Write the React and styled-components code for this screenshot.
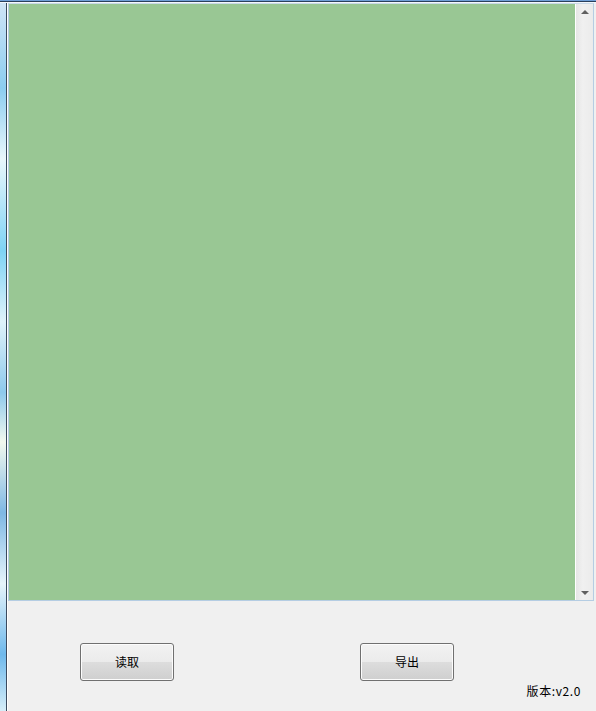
import React from 'react';
import styled, { createGlobalStyle } from 'styled-components';

const GlobalStyle = createGlobalStyle`
  html, body {
    margin: 0;
    padding: 0;
    background: #f0f0f0;
  }
  body {
    font-family: "Noto Sans CJK SC", "DejaVu Sans", sans-serif;
    font-size: 12px;
    color: #000;
  }
`;

const Screen = styled.div`
  width: 596px;
  height: 711px;
  display: flex;
  flex-direction: column;
  overflow: hidden;
  background: #f0f0f0;
`;

const TopEdge = styled.div`
  height: 3px;
  flex: none;
  background: linear-gradient(
    to bottom,
    #6f9fd8 0,
    #6f9fd8 1px,
    #2b3f5a 1px,
    #2b3f5a 2px,
    #f4f8fc 2px
  );
`;

const Body = styled.div`
  flex: 1;
  display: flex;
  min-height: 0;
`;

const LeftEdge = styled.div`
  width: 8px;
  flex: none;
  background:
    linear-gradient(to right, transparent 0, transparent 6px, #3b4a5e 6px, #3b4a5e 7px, #ffffff 7px),
    linear-gradient(
      to bottom,
      #cfe4f6 0%,
      #8ccdf0 12%,
      #e9f6fb 22%,
      #7fd3f5 35%,
      #dff2fa 45%,
      #8ec9ec 55%,
      #f2f8ee 62%,
      #7fb8e4 72%,
      #e6f4fb 82%,
      #6fb9ec 92%,
      #d6eef9 100%
    );
`;

const Content = styled.div`
  flex: 1;
  display: flex;
  flex-direction: column;
`;

const LogBox = styled.div`
  height: 598px;
  margin-right: 2px;
  display: flex;
  border: 1px solid #b5cde3;
  border-top-color: #c9d9e8;
  box-sizing: border-box;
  background: #fff;
`;

const LogArea = styled.div`
  flex: 1;
  background: #99c794;
`;

const ScrollTrack = styled.div`
  width: 17px;
  display: flex;
  flex-direction: column;
  justify-content: space-between;
  align-items: center;
  background: linear-gradient(to right, #e6e6e6, #f0f0f0 40%, #ebebeb);
  border-left: 1px solid #ffffff;
  padding: 6px 0 5px;
`;

const Arrow = styled.div`
  width: 0;
  height: 0;
  border-left: 4px solid transparent;
  border-right: 4px solid transparent;
  ${(p) =>
    p.$down
      ? 'border-top: 4px solid #606060;'
      : 'border-bottom: 4px solid #606060;'}
`;

const Footer = styled.div`
  flex: 1;
  display: flex;
  flex-direction: column;
  padding-top: 42px;
`;

const ButtonRow = styled.div`
  display: flex;
  gap: 186px;
  padding-left: 72px;
`;

const Button = styled.button`
  width: 94px;
  height: 38px;
  border: 1px solid #707070;
  border-radius: 3px;
  background: linear-gradient(
    to bottom,
    #f2f2f2 0%,
    #ebebeb 49%,
    #dddddd 50%,
    #cfcfcf 100%
  );
  box-shadow: inset 0 0 0 1px #fcfcfc;
  font-family: "Noto Sans CJK SC", sans-serif;
  font-size: 12px;
  color: #000;
  padding: 0 0 2px;
  cursor: default;
`;

const Version = styled.div`
  align-self: flex-end;
  margin-top: 2px;
  margin-right: 15px;
  font-size: 12px;
  line-height: 16px;
  letter-spacing: 0.6px;
`;

export default function App() {
  return (
    <>
      <GlobalStyle />
      <Screen>
        <TopEdge />
        <Body>
          <LeftEdge />
          <Content>
            <LogBox>
              <LogArea />
              <ScrollTrack>
                <Arrow />
                <Arrow $down />
              </ScrollTrack>
            </LogBox>
            <Footer>
              <ButtonRow>
                <Button>读取</Button>
                <Button>导出</Button>
              </ButtonRow>
              <Version>版本:v2.0</Version>
            </Footer>
          </Content>
        </Body>
      </Screen>
    </>
  );
}
